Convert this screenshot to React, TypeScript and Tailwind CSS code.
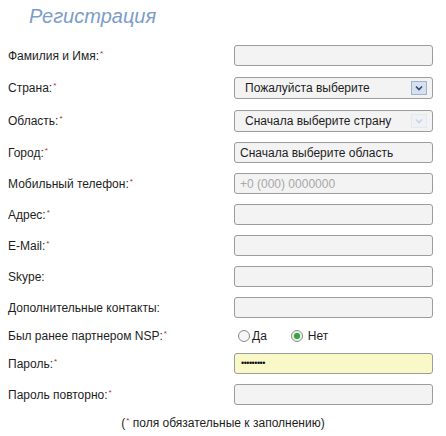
import type { ReactNode } from 'react';

const font = { fontFamily: '"Liberation Sans", Arial, sans-serif' };

function Req() {
  return <sup className="relative -top-[4px] ml-px text-[8px] text-[#a83232]">*</sup>;
}

function Row({ label, req, h = 'h-[31px]', children }: { label: string; req?: boolean; h?: string; children: ReactNode }) {
  return (
    <div className={`flex items-center ${h}`}>
      <div className="w-[226px] text-[12px] text-[#1e1e1e]">
        {label}
        {req && <Req />}
      </div>
      {children}
    </div>
  );
}

function Field({ placeholder, value, yellow, dots }: { placeholder?: string; value?: string; yellow?: boolean; dots?: boolean }) {
  return (
    <div
      className={`flex h-[21px] w-[199px] items-center rounded-[3px] border border-[#9c9c9c] px-[5px] text-[12px] ${
        yellow ? 'bg-[#f8f9c6]' : 'bg-[#f3f3f3]'
      }`}
    >
      {placeholder && <span className="text-[#a8a8a8]">{placeholder}</span>}
      {value && <span className="text-[#1e1e1e]">{value}</span>}
      {dots && <span className="pl-[1px] text-[9px] tracking-[-0.5px] text-[#111]">•••••••••</span>}
    </div>
  );
}

function Chevron({ disabled }: { disabled?: boolean }) {
  return (
    <div
      className={`mr-[5px] flex h-[14px] w-[16px] items-center justify-center border ${
        disabled ? 'border-[#e4e9f0] bg-[#eef2f7]' : 'border-[#9fb3cc] bg-[#d5e1ee]'
      }`}
    >
      <svg width="8" height="6" viewBox="0 0 8 6">
        <path d="M1 1.5 L4 4.5 L7 1.5" fill="none" stroke={disabled ? '#c9d3df' : '#2c4a75'} strokeWidth="1.6" />
      </svg>
    </div>
  );
}

function Select({ text, disabled }: { text: string; disabled?: boolean }) {
  return (
    <div className="flex h-[22px] w-[199px] items-center justify-between rounded-[3px] border border-[#9c9c9c] bg-[#f3f3f3] pl-[10px] text-[12px] text-[#1e1e1e]">
      <span>{text}</span>
      <Chevron disabled={disabled} />
    </div>
  );
}

function Radio({ checked }: { checked?: boolean }) {
  return (
    <span className="flex h-[12px] w-[12px] items-center justify-center rounded-full border border-[#8a8a8a] bg-[#f6f6f6]">
      {checked && <span className="h-[6px] w-[6px] rounded-full bg-[#3fa13f] shadow-[0_0_2px_#7fd07f]" />}
    </span>
  );
}

export default function App() {
  return (
    <div className="h-[436px] w-[446px] bg-white pl-[8px]" style={font}>
      <div className="h-[40px] pl-[21px] pt-[1px]">
        <h1 className="text-[20px] italic text-[#7c9cc8]">Регистрация</h1>
      </div>
      <Row label="Фамилия и Имя:" req>
        <Field />
      </Row>
      <Row label="Страна:" req h="h-[33px]">
        <Select text="Пожалуйста выберите" />
      </Row>
      <Row label="Область:" req h="h-[33px]">
        <Select text="Сначала выберите страну" disabled />
      </Row>
      <Row label="Город:" req>
        <Field value="Сначала выберите область" />
      </Row>
      <Row label="Мобильный телефон:" req>
        <Field placeholder="+0 (000) 0000000" />
      </Row>
      <Row label="Адрес:" req>
        <Field />
      </Row>
      <Row label="E-Mail:" req>
        <Field />
      </Row>
      <Row label="Skype:">
        <Field />
      </Row>
      <Row label="Дополнительные контакты:">
        <Field />
      </Row>
      <Row label="Был ранее партнером NSP:" req h="h-[25px]">
        <div className="flex items-center gap-[2px] pl-[4px] text-[12px] text-[#1e1e1e]">
          <Radio />
          <span className="mr-[22px]">Да</span>
          <Radio checked />
          <span className="ml-[3px]">Нет</span>
        </div>
      </Row>
      <Row label="Пароль:" req>
        <Field dots yellow />
      </Row>
      <Row label="Пароль повторно:" req>
        <Field />
      </Row>
      <div className="flex h-[26px] items-center justify-center pr-[8px] text-[12px] text-[#1e1e1e]">
        <span>
          (<Req /> поля обязательные к заполнению)
        </span>
      </div>
    </div>
  );
}
